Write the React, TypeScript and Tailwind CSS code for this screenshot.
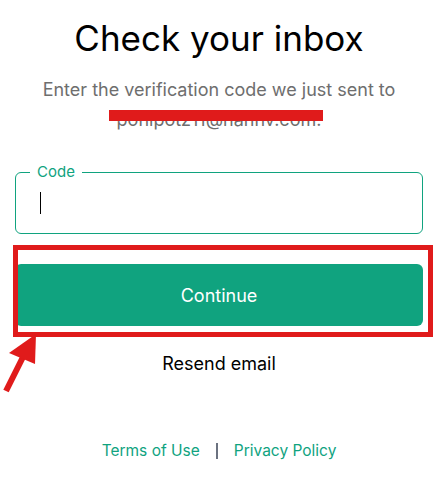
export default function App() {
  return (
    <div className="relative h-[483px] w-[448px] overflow-hidden bg-white font-['Inter',sans-serif]">
      <div className="flex flex-col items-center pl-[15px] pr-[25px] pt-[18px]">
        <h1 className="text-[35px] leading-[40px] font-normal text-black">
          Check your inbox
        </h1>
        <p className="mt-[17px] text-center text-[18px] leading-[30px] text-[#6e6e6e]">
          Enter the verification code we just sent to
          <br />
          ponipotz11@nahhv.com.
        </p>

        {/* Code field */}
        <div className="relative mt-[37px] h-[62px] w-full rounded-[6px] border border-[#10a37f]">
          <span className="absolute left-[14px] top-[-9px] bg-white px-[7px] text-[15px] leading-[16px] text-[#10a37f]">
            Code
          </span>
          <div className="flex h-full items-center pl-[24px]">
            <span className="block h-[22px] w-[1px] bg-black" />
          </div>
        </div>

        <button className="mt-[30px] h-[62px] w-full rounded-[6px] bg-[#10a37f] text-[18px] text-white">
          Continue
        </button>

        <div className="mt-[26px] text-[18px] leading-[24px] text-black">Resend email</div>

        <div className="mt-[63px] flex items-center text-[15.5px] leading-[24px] text-[#10a37f]">
          <span>Terms of Use</span>
          <span className="mx-[16px] h-[16px] w-[2px] bg-[#6b7280]" />
          <span>Privacy Policy</span>
        </div>
      </div>

      {/* annotations */}
      <div className="absolute left-[109px] top-[110px] h-[11px] w-[214px] bg-[#e01b1b]" />
      <div className="absolute left-[13px] top-[245px] h-[92px] w-[420px] border-[5px] border-[#e01b1b]" />
      <svg className="absolute left-0 top-[320px]" width="60" height="90" viewBox="0 320 60 90">
        <line x1="6" y1="391" x2="24" y2="355" stroke="#e01b1b" strokeWidth="6" />
        <polygon points="9,353 36,334 35,364" fill="#e01b1b" />
      </svg>
    </div>
  );
}
